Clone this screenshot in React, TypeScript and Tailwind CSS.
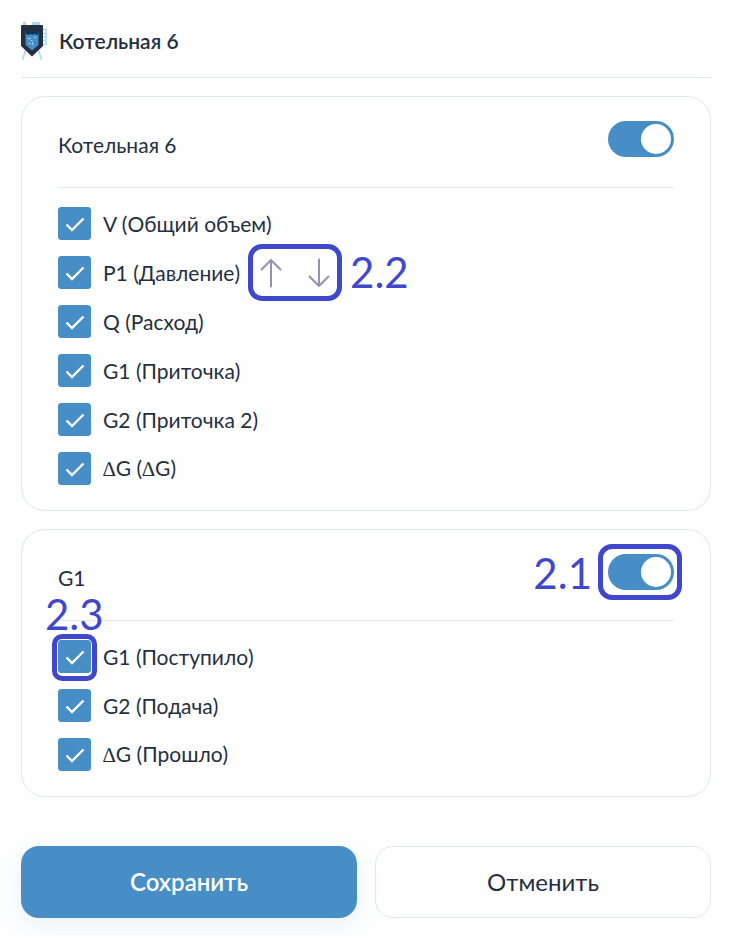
import type { ReactNode } from "react";

type Item = { id: string; label: string; sortable?: boolean; mark?: string };

const boilerItems: Item[] = [
  { id: "v", label: "V (Общий объем)" },
  { id: "p1", label: "P1 (Давление)", sortable: true },
  { id: "q", label: "Q (Расход)" },
  { id: "g1", label: "G1 (Приточка)" },
  { id: "g2", label: "G2 (Приточка 2)" },
  { id: "dg", label: "∆G (∆G)" },
];

const flowItems: Item[] = [
  { id: "in", label: "G1 (Поступило)", mark: "2.3" },
  { id: "out", label: "G2 (Подача)" },
  { id: "passed", label: "∆G (Прошло)" },
];

function TankIcon() {
  return (
    <svg width="28" height="40" viewBox="1 0 28 40" aria-hidden="true">
      <g fill="none" stroke="#a3daf8" strokeWidth="1.6">
        <path d="M5.500 29 2.800 38.500M18.500 29l2.700 9.500" />
        <path d="M22 8.500h4v15h-4M22 12.500h4M22 16h4M22 19.500h4" strokeWidth="1.4" />
      </g>
      <path d="M3 1h3v4H3zM12 1h8v4h-8z" fill="#a3daf8" />
      <path d="M2 4h20a1 1 0 0 1 1 1v20L12 35.500 1 25V5a1 1 0 0 1 1-1z" fill="#252f3f" />
      <path d="M5.500 10h13v14l-6.500 5.500L5.500 24z" fill="#468ec5" />
      <path d="M5.500 10h13v3l-2 1-2-1-2 1-2-1-2 1-3-1z" fill="#073a56" />
      <path d="M8 17.500h2.500M11 19.500h1.500M14.500 16.500h1.500M13 21.500l-1 2.500M9 22.500h1.500" stroke="#b5dbf3" strokeWidth="1.100" />
    </svg>
  );
}

function Arrow({ down }: { down?: boolean }) {
  return (
    <svg
      width="22"
      height="30"
      viewBox="0 0 22 30"
      fill="none"
      stroke="#9390b4"
      strokeWidth="2"
      strokeLinecap="round"
      strokeLinejoin="round"
      aria-hidden="true"
    >
      {down ? <path d="M11 1.500v26.500M1.500 18.500 11 28l9.500-9.500" /> : <path d="M11 28.500V2M1.500 11.500 11 2l9.500 9.500" />}
    </svg>
  );
}

function Mark({ className, children }: { className: string; children: ReactNode }) {
  return (
    <span className={`pointer-events-none absolute text-[42px] leading-10 text-[#3f48cc] ${className}`}>
      {children}
    </span>
  );
}

function Frame({ className }: { className: string }) {
  return <span className={`pointer-events-none absolute border-[5px] border-[#3f48cc] ${className}`} />;
}

/* The increment sign is set in a serif face, the rest of the label in Lato. */
function LabelText({ text }: { text: string }) {
  return text.split(/(∆)/).map((part, i) =>
    part === "∆" ? (
      <span key={i} className="font-['Liberation_Serif',serif]">
        ∆
      </span>
    ) : (
      part
    ),
  );
}

function Row({ item }: { item: Item }) {
  return (
    <li className="flex h-[33px] items-center">
      <span className="relative grid size-[33px] shrink-0 place-items-center">
        <input
          id={item.id}
          type="checkbox"
          defaultChecked
          className="peer col-start-1 row-start-1 size-[33px] appearance-none rounded-[3px] border border-[#468ec5] checked:bg-[#468ec5]"
        />
        <svg
          className="pointer-events-none invisible col-start-1 row-start-1 peer-checked:visible"
          width="33"
          height="33"
          viewBox="0 0 33 33"
          fill="none"
          stroke="#fff"
          strokeWidth="2.400"
          aria-hidden="true"
        >
          <path d="M8.500 17.500 14 23 25.500 11.500" />
        </svg>
        {item.mark && (
          <>
            <Frame className="-inset-x-[6px] -top-[6px] -bottom-2 rounded-[10px]" />
            <Mark className="bottom-full -left-[13px] mb-[6px]">{item.mark}</Mark>
          </>
        )}
      </span>
      <label htmlFor={item.id} className="pl-3 text-[21px] leading-[33px]">
        <LabelText text={item.label} />
      </label>
      {item.sortable && (
        <span className="relative ml-5 flex h-[33px] items-center gap-[26px]">
          <button type="button" aria-label="Переместить вверх">
            <Arrow />
          </button>
          <button type="button" aria-label="Переместить вниз">
            <Arrow down />
          </button>
          <Frame className="-inset-x-3 -inset-y-3 rounded-[14px]" />
          <Mark className="-top-1 left-full ml-5">2.2</Mark>
        </span>
      )}
    </li>
  );
}

function Card({ title, items, mark }: { title: string; items: Item[]; mark?: string }) {
  return (
    <section className="rounded-[24px] border border-[#daeaee] px-9 pt-6 pb-[25px]">
      <header className="flex items-start justify-between border-b border-[#daeaee] pb-[18px]">
        <h2 className="text-[21px] leading-[48px]">{title}</h2>
        <span className="relative flex">
          <input
            type="checkbox"
            role="switch"
            aria-label={title}
            defaultChecked
            className="h-9 w-[66px] appearance-none rounded-full bg-gray-300 p-[3px] before:block before:size-[30px] before:rounded-full before:bg-white checked:bg-[#468ec5] checked:before:ml-[30px]"
          />
          {mark && (
            <>
              <Frame className="-inset-y-[10px] -right-2 -left-[10px] rounded-[14px]" />
              <Mark className="-top-[1px] right-full mr-4">{mark}</Mark>
            </>
          )}
        </span>
      </header>
      <ul className="flex flex-col gap-4 pt-[19px]">
        {items.map((item) => (
          <Row key={item.id} item={item} />
        ))}
      </ul>
    </section>
  );
}

export default function App() {
  return (
    <main className="bg-[#fefefe] px-[21px] pt-[21px] pb-[18px] font-['Lato','Open_Sans',sans-serif] text-[#252f3f]">
      <header className="flex items-center gap-[10px] border-b border-[#daeaee] pb-4">
        <TankIcon />
        <h1 className="text-[21px] leading-10 font-semibold">Котельная 6</h1>
      </header>
      <form className="pt-[18px]" onSubmit={(e) => e.preventDefault()}>
        <div className="flex flex-col gap-[18px]">
          <Card title="Котельная 6" items={boilerItems} />
          <Card title="G1" items={flowItems} mark="2.1" />
        </div>
        <div className="grid grid-cols-2 gap-[18px] pt-[49px]">
          <button
            type="submit"
            className="h-[72px] rounded-[18px] bg-[#468ec5] text-2xl font-semibold text-white shadow-[0_8px_24px_rgba(70,142,197,0.1)]"
          >
            Сохранить
          </button>
          <button type="button" className="h-[72px] rounded-[18px] border border-[#daeaee] text-2xl">
            Отменить
          </button>
        </div>
      </form>
    </main>
  );
}
